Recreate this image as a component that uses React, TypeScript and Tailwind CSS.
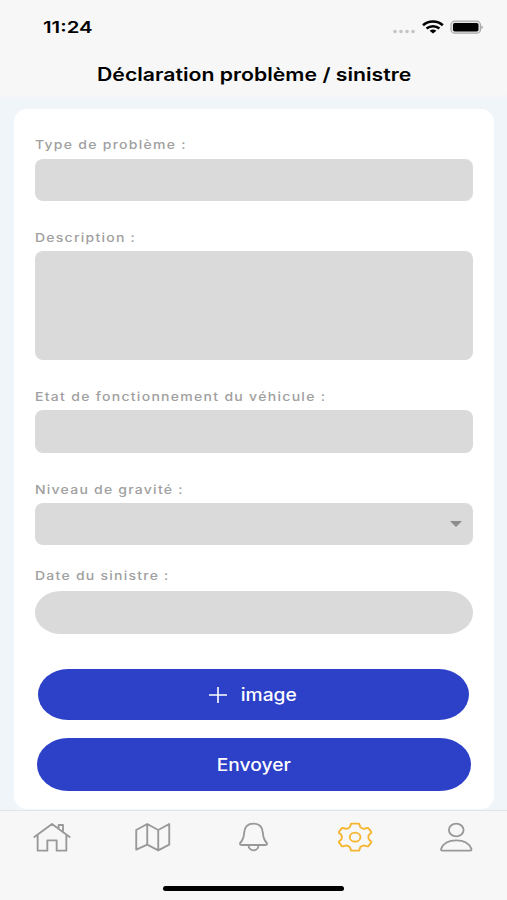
import React from 'react';

interface FieldProps {
  label: string;
  textClass: string;
  labelClass: string;
  boxClass: string;
  children?: React.ReactNode;
}

const Field: React.FC<FieldProps> = ({ label, textClass, labelClass, boxClass, children }) => {
  return (
    <div>
      <div className={`flex text-[12.2px] leading-4 font-medium text-[#a0a0a0] ${labelClass}`}>
        <span className={`origin-left whitespace-nowrap ${textClass}`}>{label}</span>
      </div>
      <div className={`bg-[#dadada] ${boxClass}`}>{children}</div>
    </div>
  );
};

const StatusBar = () => (
  <div className="flex h-[54px] items-center justify-between pl-[43px] pr-6">
    <span className="origin-left scale-x-[1.27] text-[16px] font-semibold">11:24</span>
    <svg width="91" height="16" viewBox="0 0 91 16">
      <g fill="#c4c4c4">
        <circle cx="3" cy="12.5" r="1.8" />
        <circle cx="9" cy="12.5" r="1.8" />
        <circle cx="15" cy="12.5" r="1.8" />
        <circle cx="21" cy="12.5" r="1.8" />
      </g>
      <g fill="none" stroke="#000" strokeWidth="2.6">
        <path d="M31 6.2C36.6 1.3 45.4 1.3 50.8 6.2" />
        <path d="M34.5 9.6C38.3 6.4 43.7 6.4 47.4 9.6" />
      </g>
      <path d="M37.6 11.7Q41 9.4 44.4 11.7L41 14.4Z" />
      <rect x="59" y="2.2" width="29.5" height="12" rx="3.8" fill="#e4e4e4" stroke="#a9a9a9" strokeWidth="1.2" />
      <rect x="61" y="4" width="25.5" height="8.6" rx="1.8" />
      <path d="M89.5 6.5v3.5q1.2-.4 1.2-1.7t-1.2-1.8" fill="#8f8f8f" />
    </svg>
  </div>
);

const TabBar = () => (
  <nav className="grid h-[90px] shrink-0 grid-cols-5 content-start justify-items-center border-t border-[#e2e4e6] bg-[#f7f7f7] pt-[10px]">
    <svg width="40" height="32" viewBox="92 63 120 96" fill="none" stroke="#999" strokeWidth="5.6" strokeLinecap="round" strokeLinejoin="round">
      <path d="M102 111L155 72L208 111M112 105V152H141V121H169V152H198V105M175 84V75H188V95" />
    </svg>
    <svg width="40" height="32" viewBox="396.3 63 120 96" fill="none" stroke="#999" strokeWidth="5.6" strokeLinejoin="round">
      <path d="M409 90L442 72L475 90L508 72V134L475 151L442 134L409 149ZM442 72V134M475 90V151" />
    </svg>
    <svg width="40" height="32" viewBox="700.5 63 120 96" fill="none" stroke="#999" strokeWidth="5.6" strokeLinejoin="round">
      <path d="M762 71C743 71 735 84 734 98C733 114 730 121 722 129Q720 135 727 135H797Q804 135 802 129C794 121 791 114 790 98C789 84 781 71 762 71ZM747 136C748 156 776 156 777 136" />
    </svg>
    <svg width="40" height="32" viewBox="245.7 63 120 96" fill="none" stroke="#f5b52e" strokeWidth="5.6" strokeLinejoin="round">
      <path d="M295 71H317Q319 71 319 74L321 80Q322 82 325 84L330 86Q332 87 335 86L342 84Q345 83 347 86L354 95Q356 98 353 100L348 104Q346 106 346 109V114Q346 117 348 119L353 123Q356 125 354 128L347 137Q345 140 342 139L335 137Q332 136 330 137L325 139Q322 141 321 143L319 149Q319 152 317 152H295Q293 152 293 149L291 143Q290 141 287 139L282 137Q280 136 277 137L270 139Q267 140 265 137L258 128Q256 125 259 123L264 119Q266 117 266 114V109Q266 106 264 104L259 100Q256 98 258 95L265 86Q267 83 270 84L277 86Q280 87 282 86L287 84Q290 82 291 80L293 74Q293 71 295 71Z" />
      <ellipse cx="306" cy="111.5" rx="16" ry="13.5" />
    </svg>
    <svg width="40" height="32" viewBox="549.3 63 120 96" fill="none" stroke="#999" strokeWidth="5.6" strokeLinejoin="round">
      <ellipse cx="610" cy="90" rx="22" ry="19" />
      <path d="M568 152Q563 152 565 146C571 130 588 121 610 121S649 130 655 146Q657 152 652 152Z" />
    </svg>
    <div className="col-span-5 mt-[33px] h-[5px] w-[181px] rounded-full bg-black" />
  </nav>
);

const App = () => {
  return (
    <div className="flex h-[900px] w-[507px] flex-col overflow-hidden bg-[#f0f5f9] font-['Inter',sans-serif] text-black">
      <header className="h-[100px] shrink-0 bg-linear-to-b from-[#f7f7f7] from-92% to-[#f0f5f9]">
        <StatusBar />
        <h1 className="flex h-10 items-center justify-center pl-px text-[18px] font-semibold">
          <span className="scale-x-[1.18] whitespace-nowrap">Déclaration problème / sinistre</span>
        </h1>
      </header>

      <main className="mx-[14px] mt-[9px] mb-px h-[700px] w-[480px] shrink-0 rounded-[13px] bg-white px-[21px] pt-[28px]">
        <Field label="Type de problème :" textClass="scale-x-[1.15] tracking-[1.1px]" labelClass="mb-[5.6px]" boxClass="h-[42.4px] w-[438px] rounded-lg" />
        <Field label="Description :" textClass="scale-x-[1.15] tracking-[1.08px]" labelClass="mt-[29px] mb-[5.5px]" boxClass="h-[108.5px] w-[438px] rounded-lg" />
        <Field label="Etat de fonctionnement du véhicule :" textClass="scale-x-[1.15] tracking-[1.12px]" labelClass="mt-[29px] mb-[5.3px]" boxClass="h-[42.4px] w-[438px] rounded-lg" />
        <Field label="Niveau de gravité :" textClass="scale-x-[1.15] tracking-[1.07px]" labelClass="mt-[29px] mb-[5.3px]" boxClass="flex h-[42.4px] w-[438px] items-center justify-end rounded-lg pr-[11px]">
          <svg width="12" height="6" viewBox="0 0 12 6" fill="#8c8c8c">
            <path d="M0 0h12L6 6z" />
          </svg>
        </Field>
        <Field label="Date du sinistre :" textClass="scale-x-[1.15] tracking-[1.08px]" labelClass="mt-[22.6px] mb-[7.4px]" boxClass="h-[42.4px] w-[438px] rounded-[26px/21px]" />

        <button className="mt-[35.5px] ml-[3px] flex h-[51px] w-[431px] items-center justify-center rounded-[30px/25.5px] bg-[#2d40c8] text-[17px] font-medium text-white">
          <svg className="mr-[17px] -ml-[4px]" width="18" height="16" viewBox="0 0 18 16" stroke="#fff" strokeWidth="1.6">
            <path d="M0 8h18M9 0v16" />
          </svg>
          <span className="scale-x-[1.13] pt-[2px]">image</span>
        </button>
        <button className="mt-[18px] ml-[2px] flex h-[53px] w-[434px] items-center justify-center rounded-[31px/26.5px] bg-[#2d40c8] pt-[2px] text-[17px] font-medium text-white">
          <span className="scale-x-[1.13]">Envoyer</span>
        </button>
      </main>

      <TabBar />
    </div>
  );
};

export default App;
